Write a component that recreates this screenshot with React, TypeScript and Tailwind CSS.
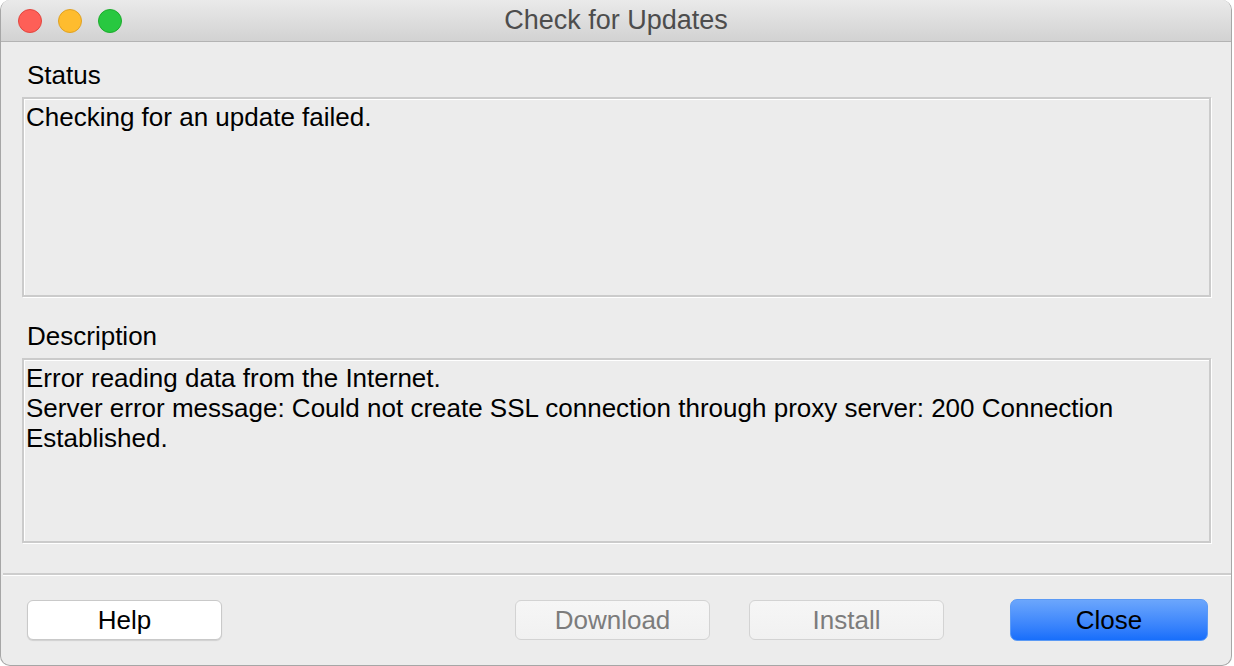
export default function App() {
  const font = { fontFamily: '"Liberation Sans", Arial, sans-serif' };

  return (
    <div className="w-[1234px] h-[666px] bg-white overflow-hidden" style={font}>
      <div className="w-[1232px] h-[666px] flex flex-col bg-[#ececec] rounded-[10px] border-x border-b border-[#a6a6a6] overflow-hidden">
        {/* title bar */}
        <div className="relative h-[42px] shrink-0 flex items-center pl-[17px] bg-gradient-to-b from-[#eaeaea] to-[#d2d2d2] border-b border-[#b3b3b3]">
          <div className="flex items-center gap-[16px]">
            <span className="w-[24px] h-[24px] rounded-full bg-[#fe5f57] border border-[#e2463f]" />
            <span className="w-[24px] h-[24px] rounded-full bg-[#febc2e] border border-[#dfa123]" />
            <span className="w-[24px] h-[24px] rounded-full bg-[#28c840] border border-[#1dac2c]" />
          </div>
          <div className="absolute inset-0 flex items-center justify-center text-[27px] text-[#4d4d4d] pointer-events-none">
            Check for Updates
          </div>
        </div>

        {/* content */}
        <div className="flex flex-col pl-[21px] pr-[20px] pt-[18px] text-[26px] leading-[30px] text-black">
          <div className="pl-[5px]">Status</div>
          <div className="mt-[7px] h-[200px] border-2 border-[#cbcbcb] shadow-[inset_1px_1px_0_#ffffff,1px_1px_0_#ffffff] pl-[2px] pt-[3px]">
            Checking for an update failed.
          </div>

          <div className="pl-[5px] mt-[24px]">Description</div>
          <div className="mt-[7px] h-[185px] border-2 border-[#cbcbcb] shadow-[inset_1px_1px_0_#ffffff,1px_1px_0_#ffffff] pl-[2px] pt-[3px]">
            <div>Error reading data from the Internet.</div>
            <div>Server error message: Could not create SSL connection through proxy server: 200 Connection</div>
            <div>Established.</div>
          </div>
        </div>

        {/* separator */}
        <div className="mt-[30px] ml-[2px] h-[2px] bg-[#cdcdcd] shadow-[0_1px_0_#ffffff]" />

        {/* buttons */}
        <div className="flex items-center pl-[26px] pt-[24px] text-[26px] leading-[30px]">
          <button className="w-[195px] h-[40px] pb-[1px] rounded-[6px] bg-white border border-[#c9c9c9] shadow-[0_1px_1px_rgba(0,0,0,0.12)] text-black">
            Help
          </button>
          <button
            disabled
            className="ml-[293px] w-[195px] h-[40px] pb-[1px] rounded-[6px] bg-gradient-to-b from-[#f6f6f6] to-[#f1f1f1] border border-[#d3d3d3] text-[#7c7c7c]"
          >
            Download
          </button>
          <button
            disabled
            className="ml-[39px] w-[195px] h-[40px] pb-[1px] rounded-[6px] bg-gradient-to-b from-[#f6f6f6] to-[#f1f1f1] border border-[#d3d3d3] text-[#7c7c7c]"
          >
            Install
          </button>
          <button className="ml-[66px] w-[198px] h-[42px] pb-[1px] rounded-[7px] bg-gradient-to-b from-[#6ba6fc] to-[#176efb] border border-[#5b9af5] text-black">
            Close
          </button>
        </div>
      </div>
    </div>
  );
}
